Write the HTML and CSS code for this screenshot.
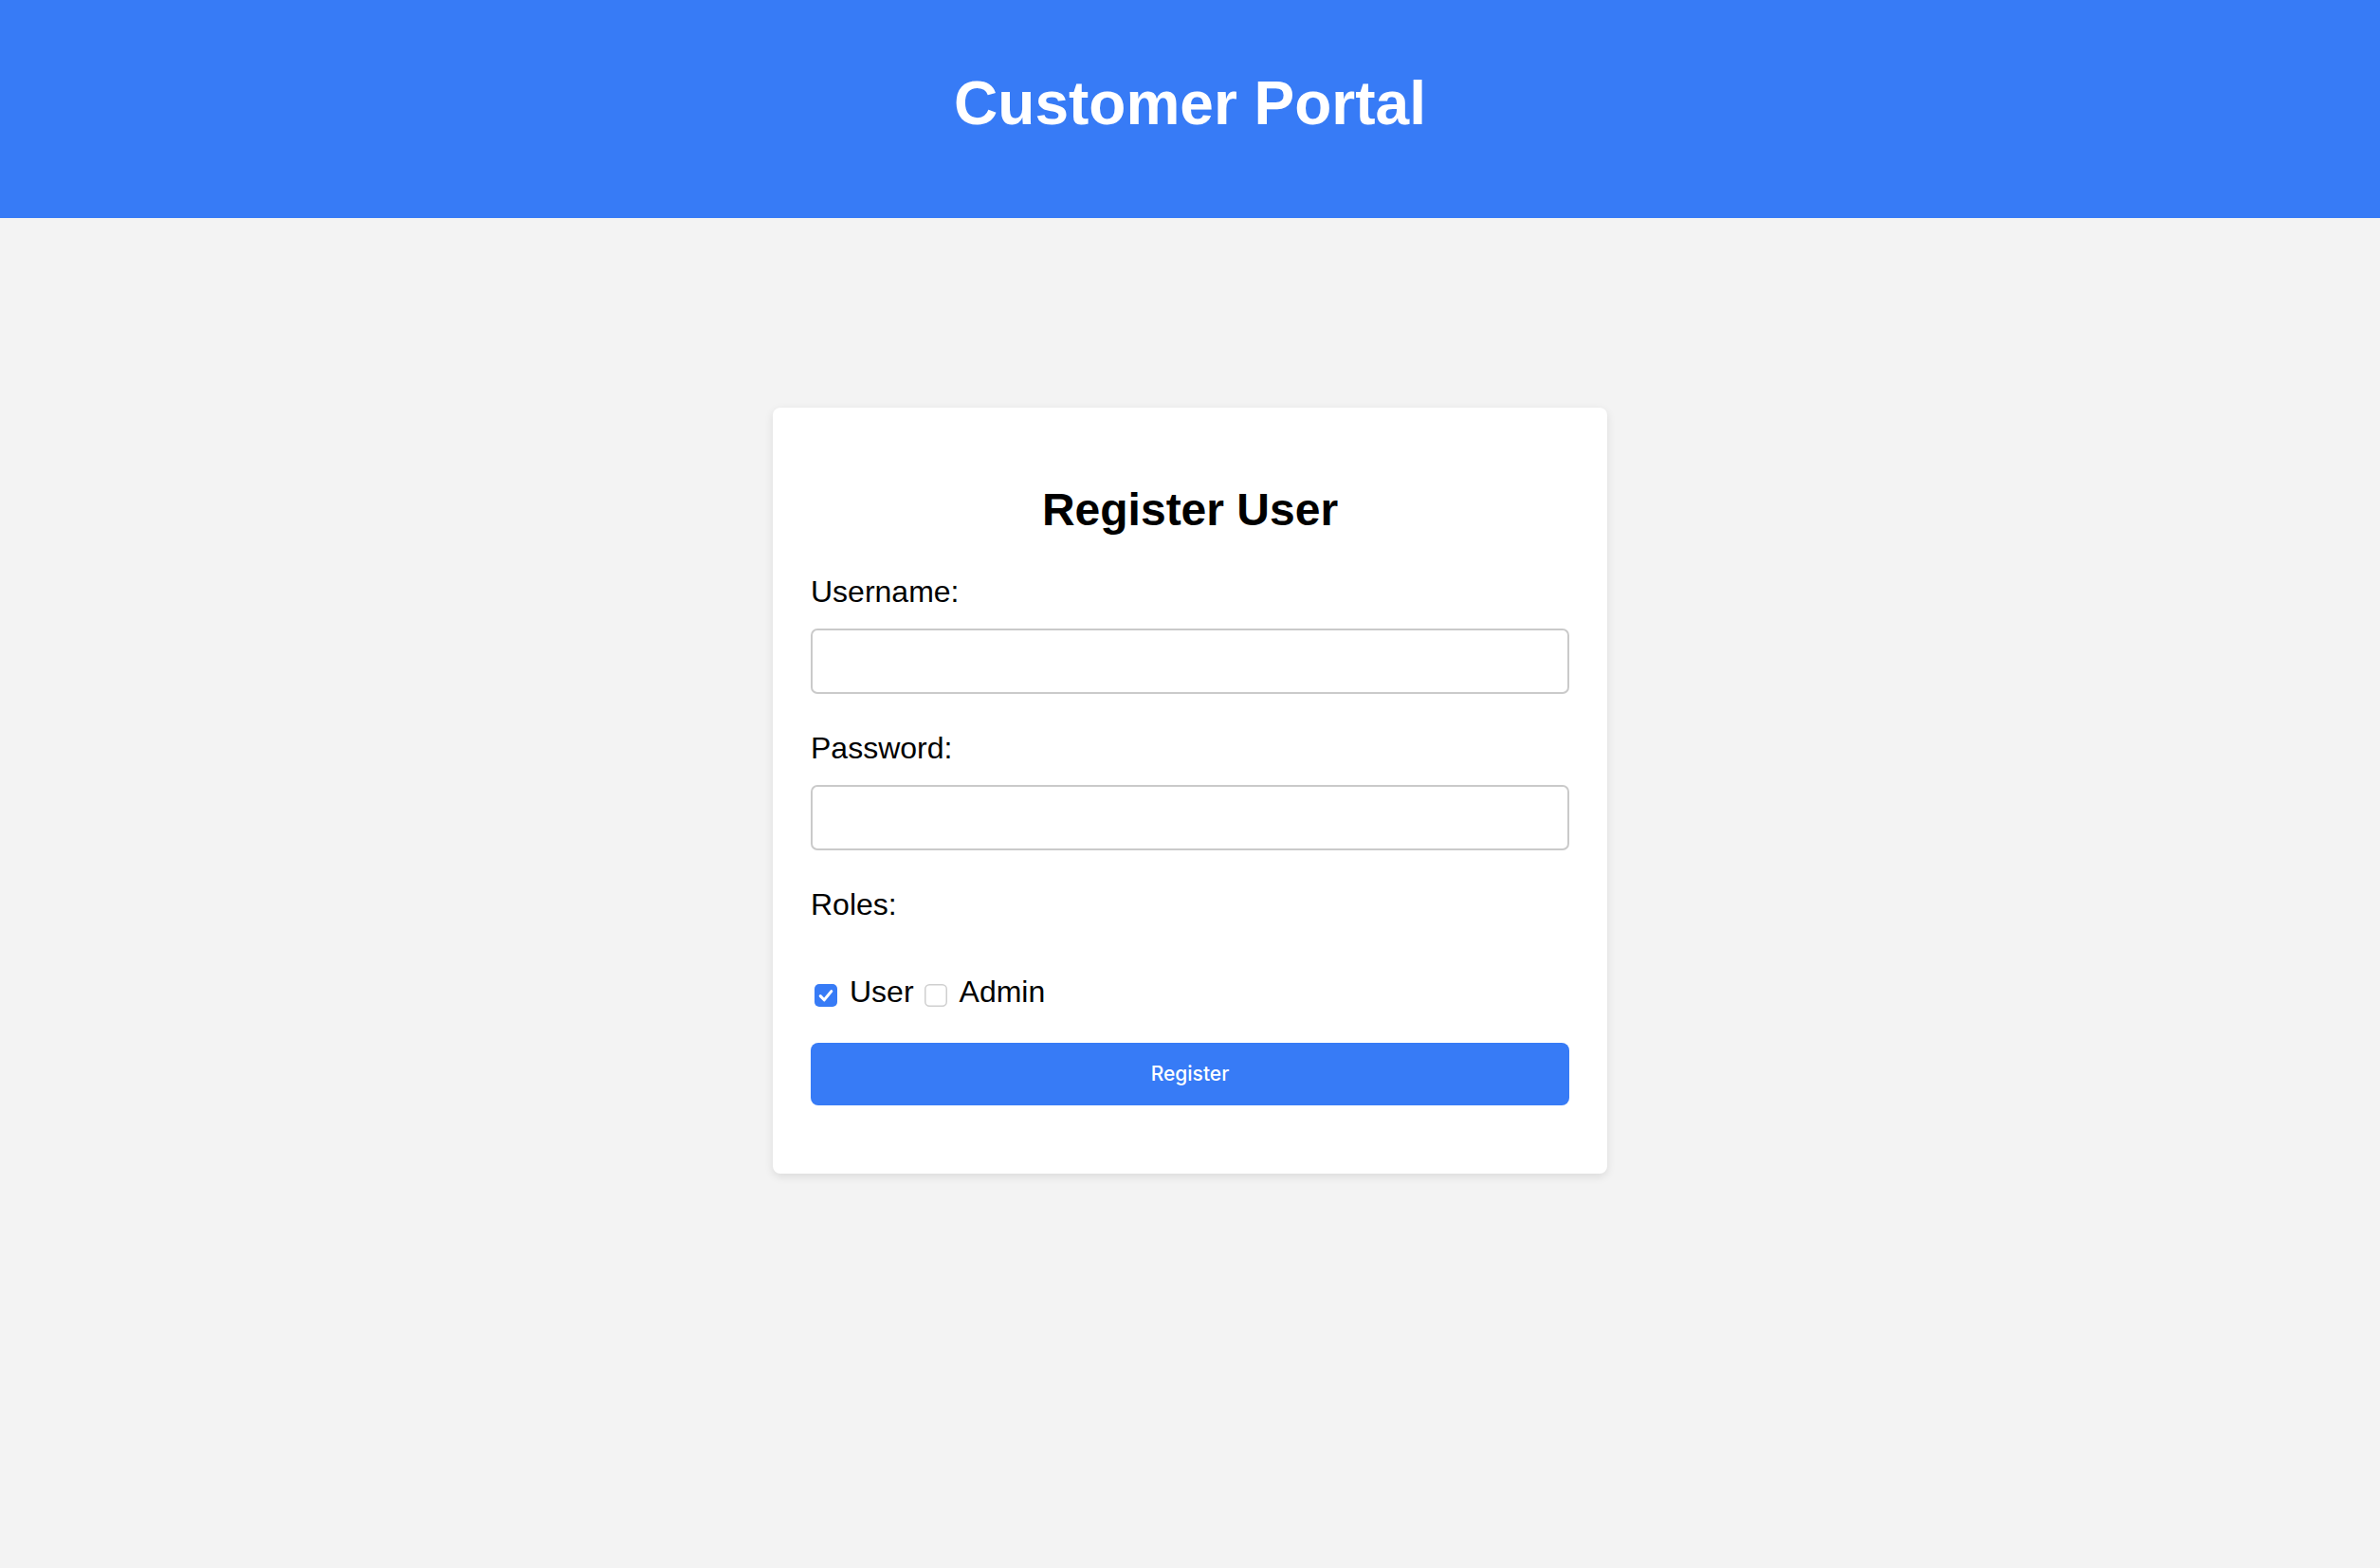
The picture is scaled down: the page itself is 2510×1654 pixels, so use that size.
FILE: index.html
```html
<!DOCTYPE html>
<html lang="en">
<head>
<meta charset="utf-8">
<title>Customer Portal</title>
<link rel="stylesheet" href="styles.css">
</head>
<body>
<header class="site-header">
  <h1 class="site-title">Customer Portal</h1>
</header>
<main class="page">
  <section class="card">
    <h2 class="card-title">Register User</h2>
    <form class="form">
      <div class="field">
        <label class="field-label" for="username">Username:</label>
        <input class="text-input" id="username" type="text">
      </div>
      <div class="field">
        <label class="field-label" for="password">Password:</label>
        <input class="text-input" id="password" type="password">
      </div>
      <div class="field field-roles">
        <span class="field-label">Roles:</span>
      </div>
      <div class="roles">
        <label class="check">
          <input class="sr-only" type="checkbox" checked>
          <svg class="box" viewBox="0 0 24 24" width="24" height="24" aria-hidden="true">
            <rect x="0" y="0" width="24" height="24" rx="5" fill="#377bf6"/>
            <path d="M6.2 12.6 L10.2 16.8 L17.8 7.6" fill="none" stroke="#ffffff" stroke-width="3" stroke-linecap="round" stroke-linejoin="round"/>
          </svg>
          <span class="check-text">User</span>
        </label>
        <label class="check check-next">
          <input class="sr-only" type="checkbox">
          <svg class="box" viewBox="0 0 24 24" width="24" height="24" aria-hidden="true">
            <rect x="0.75" y="0.75" width="22.5" height="22.5" rx="4.5" fill="#ffffff" stroke="#cfcfcf" stroke-width="1.5"/>
          </svg>
          <span class="check-text">Admin</span>
        </label>
      </div>
      <button class="submit" type="button">Register</button>
    </form>
  </section>
</main>
</body>
</html>
```

FILE: styles.css
```css
html, body {
  margin: 0;
  padding: 0;
}

body {
  background: #f3f3f3;
  font-family: "Liberation Sans", Arial, sans-serif;
  color: #000;
  min-height: 1654px;
}

.site-header {
  background: #377bf6;
  height: 230px;
  box-sizing: border-box;
  padding-top: 73px;
  text-align: center;
}

.site-title {
  margin: 0;
  color: #ffffff;
  font-size: 64px;
  font-weight: bold;
  line-height: 1.15;
}

.page {
  display: flex;
  justify-content: center;
  padding-top: 200px;
}

.card {
  width: 880px;
  box-sizing: border-box;
  background: #ffffff;
  border-radius: 8px;
  padding: 40px;
  box-shadow: 0 3px 10px rgba(0, 0, 0, 0.1);
}

.card-title {
  margin: 40px 0 41px;
  text-align: center;
  font-size: 48px;
  font-weight: bold;
  line-height: 1.15;
}

.form {
  display: flex;
  flex-direction: column;
}

.field {
  display: flex;
  flex-direction: column;
  margin-bottom: 39px;
}

.field-roles {
  margin-bottom: 55px;
}

.field-label {
  display: block;
  font-size: 32px;
  line-height: 1.15;
  margin-bottom: 20px;
}

.field-roles .field-label {
  margin-bottom: 0;
}

.text-input {
  display: block;
  width: 100%;
  height: 69px;
  box-sizing: border-box;
  border: 2px solid #cacaca;
  border-radius: 7px;
  background: #ffffff;
  padding: 0 16px;
  font-size: 26px;
  font-family: "Liberation Sans", Arial, sans-serif;
  outline: none;
}

.roles {
  display: flex;
  align-items: center;
  height: 37px;
  margin-bottom: 35px;
}

.check {
  display: flex;
  align-items: center;
  font-size: 32px;
  line-height: 1.15;
}

.check-next {
  margin-left: 7px;
}

.box {
  display: block;
  width: 24px;
  height: 24px;
  margin: 7px 13px 0 4px;
  flex: none;
}

.sr-only {
  position: absolute;
  width: 1px;
  height: 1px;
  margin: -1px;
  padding: 0;
  overflow: hidden;
  clip: rect(0 0 0 0);
  border: 0;
}

.submit {
  width: 100%;
  height: 66px;
  border: none;
  border-radius: 8px;
  background: #377bf6;
  color: #ffffff;
  font-family: Inter, "Noto Sans", sans-serif;
  font-size: 21px;
  font-weight: 500;
  margin-bottom: 32px;
  cursor: pointer;
}
```
